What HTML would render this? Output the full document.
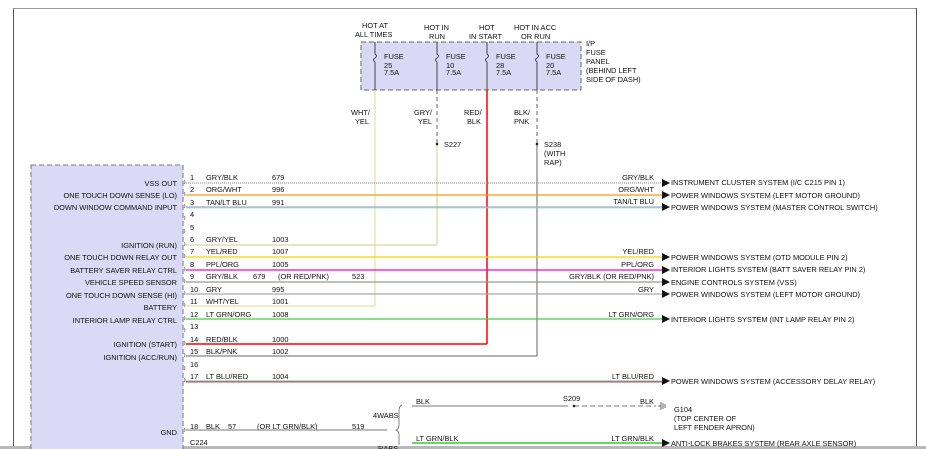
<!DOCTYPE html>
<html><head><meta charset="utf-8"><style>
html,body{margin:0;padding:0;background:#fff;}
svg{display:block;}
text{font-family:"Liberation Sans",sans-serif;font-size:7.4px;fill:#111;}
.r{text-anchor:end;}
</style></head><body>
<svg width="926" height="449" viewBox="0 0 926 449" xmlns="http://www.w3.org/2000/svg">
<rect x="0" y="0" width="926" height="449" fill="#fff"/>
<line x1="13.5" y1="8" x2="13.5" y2="449" stroke="#555" stroke-width="1"/>
<line x1="13" y1="8.5" x2="916" y2="8.5" stroke="#999" stroke-width="1"/>
<line x1="916.5" y1="8" x2="916.5" y2="449" stroke="#555" stroke-width="1"/>
<rect x="0" y="446" width="926" height="3" fill="#b8b8b8"/>

<rect x="361" y="42" width="220" height="48" fill="#d9d9f6" stroke="#666" stroke-dasharray="5,3" stroke-width="1"/>
<g stroke="#444" stroke-width="1" fill="none">
<path d="M375 42 V54 q3 2 0 4 q-3 2 0 4 V90"/>
<path d="M437 42 V54 q3 2 0 4 q-3 2 0 4 V90"/>
<path d="M487 42 V54 q3 2 0 4 q-3 2 0 4 V90"/>
<path d="M537 42 V54 q3 2 0 4 q-3 2 0 4 V90"/>
</g>
<text x="384" y="59">FUSE</text><text x="384" y="68">25</text><text x="384" y="75">7.5A</text>
<text x="446" y="59">FUSE</text><text x="446" y="68">10</text><text x="446" y="75">7.5A</text>
<text x="496" y="59">FUSE</text><text x="496" y="68">28</text><text x="496" y="75">7.5A</text>
<text x="546" y="59">FUSE</text><text x="546" y="68">20</text><text x="546" y="75">7.5A</text>
<text x="586" y="46">I/P</text><text x="586" y="55">FUSE</text><text x="586" y="64">PANEL</text><text x="586" y="73">(BEHIND LEFT</text><text x="586" y="82">SIDE OF DASH)</text>
<text x="362" y="28">HOT AT</text><text x="355" y="37">ALL TIMES</text>
<text x="424" y="30">HOT IN</text><text x="429" y="39">RUN</text>
<text x="479" y="30">HOT</text><text x="469" y="39">IN START</text>
<text x="514" y="30">HOT IN ACC</text><text x="521" y="39">OR RUN</text>

<line x1="375" y1="90" x2="375" y2="306" stroke="#e8e0a0" stroke-width="1.2"/>
<line x1="437" y1="90" x2="437" y2="144" stroke="#666" stroke-width="1" stroke-dasharray="4,3"/>
<line x1="437" y1="144" x2="437" y2="245" stroke="#d8d8a0" stroke-width="1.2"/>
<circle cx="437" cy="144" r="1.3" fill="#222"/>
<line x1="487" y1="90" x2="487" y2="344" stroke="#ff0000" stroke-width="1.5"/>
<line x1="537" y1="90" x2="537" y2="144" stroke="#666" stroke-width="1" stroke-dasharray="4,3"/>
<line x1="537" y1="144" x2="537" y2="356" stroke="#666" stroke-width="1"/>
<circle cx="537" cy="144" r="1.3" fill="#222"/>
<line x1="437" y1="245" x2="186" y2="245" stroke="#d8d8a0" stroke-width="1.2"/>
<line x1="375" y1="306" x2="186" y2="306" stroke="#e8e0a0" stroke-width="1.2"/>
<text x="351" y="115">WHT/</text><text x="355" y="124">YEL</text>
<text x="414" y="115">GRY/</text><text x="418" y="124">YEL</text>
<text x="464" y="115">RED/</text><text x="467" y="124">BLK</text>
<text x="514" y="115">BLK/</text><text x="514" y="124">PNK</text>
<text x="444" y="147">S227</text>
<text x="544" y="147">S238</text><text x="544" y="156">(WITH</text><text x="544" y="165">RAP)</text>

<rect x="31" y="165" width="152" height="290" fill="#dadaf7" stroke="#777" stroke-dasharray="5,3" stroke-width="1"/>
<text class="r" x="177" y="186">VSS OUT</text>
<text class="r" x="177" y="198">ONE TOUCH DOWN SENSE (LO)</text>
<text class="r" x="177" y="210">DOWN WINDOW COMMAND INPUT</text>
<text class="r" x="177" y="248">IGNITION (RUN)</text>
<text class="r" x="177" y="260">ONE TOUCH DOWN RELAY OUT</text>
<text class="r" x="177" y="273">BATTERY SAVER RELAY CTRL</text>
<text class="r" x="177" y="285">VEHICLE SPEED SENSOR</text>
<text class="r" x="177" y="298">ONE TOUCH DOWN SENSE (HI)</text>
<text class="r" x="177" y="310">BATTERY</text>
<text class="r" x="177" y="323">INTERIOR LAMP RELAY CTRL</text>
<text class="r" x="177" y="347">IGNITION (START)</text>
<text class="r" x="177" y="360">IGNITION (ACC/RUN)</text>
<text class="r" x="177" y="435">GND</text>
<g stroke="#777" stroke-width="0.8" fill="none">
<path d="M184 180 q2 2 0 4 M184 192 q2 2 0 4 M184 204 q2 2 0 4 M184 216 q2 2 0 4 M184 229 q2 2 0 4 M184 242 q2 2 0 4 M184 254 q2 2 0 4 M184 267 q2 2 0 4 M184 279 q2 2 0 4 M184 291 q2 2 0 4 M184 303 q2 2 0 4 M184 316 q2 2 0 4 M184 328 q2 2 0 4 M184 341 q2 2 0 4 M184 353 q2 2 0 4 M184 366 q2 2 0 4 M184 378 q2 2 0 4 M184 428 q2 2 0 4"/>
</g>
<text x="190" y="180">1</text><text x="206" y="180">GRY/BLK</text><text x="272" y="180">679</text>
<text x="190" y="192">2</text><text x="206" y="192">ORG/WHT</text><text x="272" y="192">996</text>
<text x="190" y="205">3</text><text x="206" y="205">TAN/LT BLU</text><text x="272" y="205">991</text>
<text x="190" y="217">4</text>
<text x="190" y="230">5</text>
<text x="190" y="242">6</text><text x="206" y="242">GRY/YEL</text><text x="272" y="242">1003</text>
<text x="190" y="254">7</text><text x="206" y="254">YEL/RED</text><text x="272" y="254">1007</text>
<text x="190" y="267">8</text><text x="206" y="267">PPL/ORG</text><text x="272" y="267">1005</text>
<text x="190" y="279">9</text><text x="206" y="279">GRY/BLK</text><text x="253" y="279">679</text><text x="278" y="279">(OR RED/PNK)</text><text x="352" y="279">523</text>
<text x="190" y="292">10</text><text x="206" y="292">GRY</text><text x="272" y="292">995</text>
<text x="190" y="304">11</text><text x="206" y="304">WHT/YEL</text><text x="272" y="304">1001</text>
<text x="190" y="317">12</text><text x="206" y="317">LT GRN/ORG</text><text x="272" y="317">1008</text>
<text x="190" y="329">13</text>
<text x="190" y="342">14</text><text x="206" y="342">RED/BLK</text><text x="272" y="342">1000</text>
<text x="190" y="354">15</text><text x="206" y="354">BLK/PNK</text><text x="272" y="354">1002</text>
<text x="190" y="367">16</text>
<text x="190" y="379">17</text><text x="206" y="379">LT BLU/RED</text><text x="272" y="379">1004</text>
<text x="190" y="429">18</text><text x="206" y="429">BLK</text><text x="228" y="429">57</text><text x="257" y="429">(OR LT GRN/BLK)</text><text x="352" y="429">519</text>
<text x="190" y="445">C224</text>

<g stroke-width="1.3">
<line x1="186" y1="183" x2="663" y2="183" stroke="#999" stroke-dasharray="1,1"/>
<line x1="186" y1="195" x2="663" y2="195" stroke="#ff9900"/>
<line x1="186" y1="207" x2="663" y2="207" stroke="#aab"/>
<line x1="186" y1="208" x2="663" y2="208" stroke="#88dddd" stroke-width="0.8"/>
<line x1="186" y1="257" x2="663" y2="257" stroke="#f4d800"/>
<line x1="186" y1="270" x2="663" y2="270" stroke="#ff00cc"/>
<line x1="186" y1="282" x2="663" y2="282" stroke="#999"/>
<line x1="186" y1="294" x2="663" y2="294" stroke="#aaa"/>
<line x1="186" y1="319" x2="663" y2="319" stroke="#44cc44"/>
<line x1="186" y1="344" x2="487" y2="344" stroke="#ff0000" stroke-width="1.5"/>
<line x1="186" y1="356" x2="537" y2="356" stroke="#666" stroke-width="1"/>
<line x1="186" y1="381" x2="663" y2="381" stroke="#33cccc" stroke-width="1"/>
<line x1="186" y1="382" x2="663" y2="382" stroke="#ff3333" stroke-width="1"/>
<line x1="186" y1="430" x2="387" y2="430" stroke="#777" stroke-width="1"/>
<line x1="412" y1="406" x2="568" y2="406" stroke="#777" stroke-width="1"/>
<line x1="574" y1="406" x2="656" y2="406" stroke="#777" stroke-width="1" stroke-dasharray="5,3"/>
<line x1="412" y1="443" x2="663" y2="443" stroke="#33cc33" stroke-width="1.5"/>
</g>
<circle cx="574" cy="406" r="1.3" fill="#222"/>
<path d="M402 405 q-3 1 -3 6 v14 q0 4 -3 5 q3 1 3 5 v10" stroke="#666" fill="none" stroke-width="0.8"/>
<g stroke="#444" stroke-width="0.8"><line x1="658" y1="406" x2="661" y2="406"/><line x1="661" y1="402" x2="661" y2="410"/><line x1="663" y1="403" x2="663" y2="409"/><line x1="665" y1="404" x2="665" y2="408"/></g>
<g fill="#111">
<path d="M662 179 l8 4 l-8 4z"/><path d="M662 191 l8 4 l-8 4z"/><path d="M662 203 l8 4 l-8 4z"/>
<path d="M662 253 l8 4 l-8 4z"/><path d="M662 266 l8 4 l-8 4z"/><path d="M662 278 l8 4 l-8 4z"/>
<path d="M662 290 l8 4 l-8 4z"/><path d="M662 315 l8 4 l-8 4z"/><path d="M662 377 l8 4 l-8 4z"/>
<path d="M662 439 l8 4 l-8 4z"/>
</g>
<text class="r" x="654" y="180">GRY/BLK</text>
<text class="r" x="654" y="192">ORG/WHT</text>
<text class="r" x="654" y="204">TAN/LT BLU</text>
<text class="r" x="654" y="254">YEL/RED</text>
<text class="r" x="654" y="267">PPL/ORG</text>
<text class="r" x="654" y="279">GRY/BLK (OR RED/PNK)</text>
<text class="r" x="654" y="292">GRY</text>
<text class="r" x="654" y="317">LT GRN/ORG</text>
<text class="r" x="654" y="379">LT BLU/RED</text>
<text class="r" x="654" y="404">BLK</text>
<text class="r" x="654" y="441">LT GRN/BLK</text>
<text x="416" y="404">BLK</text>
<text x="416" y="441">LT GRN/BLK</text>
<text x="563" y="401">S209</text>
<text x="373" y="418">4WABS</text>
<text x="378" y="451">RABS</text>
<text x="671" y="185">INSTRUMENT CLUSTER SYSTEM (I/C C215 PIN 1)</text>
<text x="671" y="198">POWER WINDOWS SYSTEM (LEFT MOTOR GROUND)</text>
<text x="671" y="210">POWER WINDOWS SYSTEM (MASTER CONTROL SWITCH)</text>
<text x="671" y="260">POWER WINDOWS SYSTEM (OTD MODULE PIN 2)</text>
<text x="671" y="272">INTERIOR LIGHTS SYSTEM (BATT SAVER RELAY PIN 2)</text>
<text x="671" y="285">ENGINE CONTROLS SYSTEM (VSS)</text>
<text x="671" y="297">POWER WINDOWS SYSTEM (LEFT MOTOR GROUND)</text>
<text x="671" y="322">INTERIOR LIGHTS SYSTEM (INT LAMP RELAY PIN 2)</text>
<text x="671" y="384">POWER WINDOWS SYSTEM (ACCESSORY DELAY RELAY)</text>
<text x="674" y="412">G104</text>
<text x="674" y="421">(TOP CENTER OF</text>
<text x="674" y="430">LEFT FENDER APRON)</text>
<text x="671" y="446">ANTI-LOCK BRAKES SYSTEM (REAR AXLE SENSOR)</text>
</svg>
</body></html>
